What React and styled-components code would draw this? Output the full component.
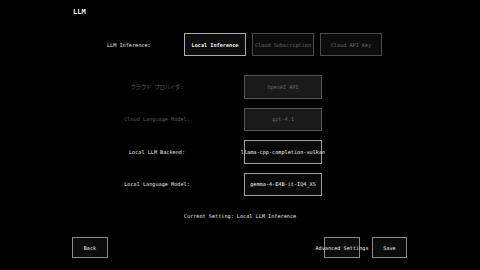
import React from "react";
import styled, { createGlobalStyle } from "styled-components";

const Global = createGlobalStyle`
  html, body { margin: 0; padding: 0; background: #000; }
  #root { width: 480px; height: 270px; }
`;

const Page = styled.div`
  width: 480px;
  height: 270px;
  background: #000;
  display: flex;
  flex-direction: column;
  font-family: "DejaVu Sans Mono", "Noto Sans CJK JP", monospace;
  color: #e6e6e6;
  overflow: hidden;
`;

const Title = styled.div`
  margin-top: 8px;
  padding-left: 73px;
  font-size: 7px;
  line-height: 9px;
  font-weight: bold;
  color: #f0f0f0;
`;

const InferenceRow = styled.div`
  margin-top: 16px;
  display: flex;
  align-items: center;
  padding-left: 107px;
  height: 23px;
`;

const InferenceLabel = styled.div`
  width: 77px;
  font-size: 5.2px;
  line-height: 6px;
`;

const ToggleGroup = styled.div`
  display: flex;
  gap: 6px;
`;

const Toggle = styled.div`
  width: 62px;
  height: 23px;
  box-sizing: border-box;
  display: flex;
  align-items: center;
  justify-content: center;
  font-size: 5.2px;
  background: #0c0c0c;
  border: 1px solid ${(p) => (p.$active ? "#adadad" : "#4a4a4a")};
  color: ${(p) => (p.$active ? "#f2f2f2" : "#6e6e6e")};
  font-weight: ${(p) => (p.$active ? "bold" : "normal")};
  white-space: nowrap;
`;

const Settings = styled.div`
  margin-top: 19px;
  display: flex;
  flex-direction: column;
  gap: 9px;
`;

const SettingRow = styled.div`
  display: flex;
  align-items: center;
  height: 23.5px;
  padding-left: 102px;
`;

const SettingLabel = styled.div`
  width: 110px;
  margin-right: 32px;
  text-align: center;
  font-size: 5.2px;
  line-height: 6px;
  white-space: nowrap;
  color: ${(p) => (p.$disabled ? "#5e5e5e" : "#e6e6e6")};
`;

const Select = styled.div`
  width: 78px;
  height: 23.5px;
  box-sizing: border-box;
  display: flex;
  align-items: center;
  justify-content: center;
  font-size: 5.2px;
  white-space: nowrap;
  background: ${(p) => (p.$disabled ? "#1a1a1a" : "#0a0a0a")};
  border: 1px solid ${(p) => (p.$disabled ? "#555555" : "#9e9e9e")};
  color: ${(p) => (p.$disabled ? "#6a6a6a" : "#eeeeee")};
`;

const Current = styled.div`
  margin-top: 17px;
  text-align: center;
  font-size: 5.2px;
  line-height: 6px;
  color: #e6e6e6;
`;

const Footer = styled.div`
  margin-top: 18px;
  display: flex;
  align-items: center;
  padding-left: 72px;
  height: 21px;
`;

const FooterButton = styled.div`
  width: ${(p) => p.$w || 36}px;
  height: 21px;
  box-sizing: border-box;
  display: flex;
  align-items: center;
  justify-content: center;
  border: 1px solid #8a8a8a;
  background: #0c0c0c;
  font-size: 5.2px;
  color: #eeeeee;
  white-space: nowrap;
  margin-left: ${(p) => p.$ml || 0}px;
`;

export default function App() {
  return (
    <>
      <Global />
      <Page>
        <Title>LLM</Title>
        <InferenceRow>
          <InferenceLabel>LLM Inference:</InferenceLabel>
          <ToggleGroup>
            <Toggle $active>Local Inference</Toggle>
            <Toggle>Cloud Subscription</Toggle>
            <Toggle>Cloud API Key</Toggle>
          </ToggleGroup>
        </InferenceRow>
        <Settings>
          <SettingRow>
            <SettingLabel $disabled>クラウド プロバイダ:</SettingLabel>
            <Select $disabled>OpenAI API</Select>
          </SettingRow>
          <SettingRow>
            <SettingLabel $disabled>Cloud Language Model:</SettingLabel>
            <Select $disabled>gpt-4.1</Select>
          </SettingRow>
          <SettingRow>
            <SettingLabel>Local LLM Backend:</SettingLabel>
            <Select>llama-cpp-completion-vulkan</Select>
          </SettingRow>
          <SettingRow>
            <SettingLabel>Local Language Model:</SettingLabel>
            <Select>gemma-4-E4B-it-IQ4_XS</Select>
          </SettingRow>
        </Settings>
        <Current>Current Setting: Local LLM Inference</Current>
        <Footer>
          <FooterButton>Back</FooterButton>
          <FooterButton $ml={216}>Advanced Settings</FooterButton>
          <FooterButton $ml={12} $w={35}>Save</FooterButton>
        </Footer>
      </Page>
    </>
  );
}
